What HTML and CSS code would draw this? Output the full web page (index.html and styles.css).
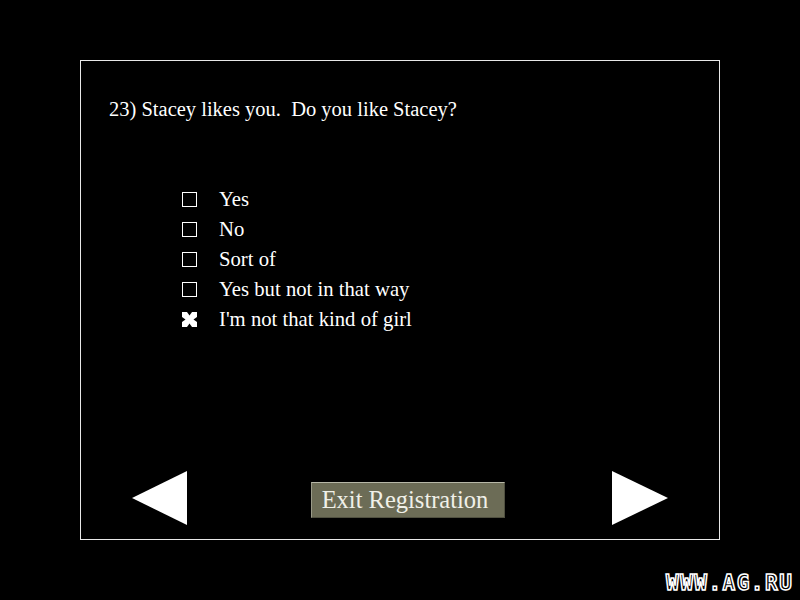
FILE: index.html
```html
<!DOCTYPE html>
<html>
<head>
  <meta charset="utf-8">
  <title>Registration</title>
  <link rel="stylesheet" href="styles.css">
</head>
<body>
 <div class="screen">
   <div class="mod-form">
     <p class="question">23) Stacey likes you.&nbsp; Do you like Stacey?</p>
     <ul class="answers">
       <li><span class="box"></span>Yes</li>
       <li><span class="box"></span>No</li>
       <li><span class="box"></span>Sort of</li>
       <li><span class="box"></span>Yes but not in that way</li>
       <li class="checked">
         <span class="box">
           <svg width="15" height="15" viewBox="0 0 15 15">
             <rect x="0" y="0" width="15" height="15" fill="#fff"/>
             <polygon points="5,0 10,0 7.5,3.5" fill="#000"/>
             <polygon points="5,15 10,15 7.5,11.5" fill="#000"/>
             <polygon points="0,5 0,10 3.5,7.5" fill="#000"/>
             <polygon points="15,5 15,10 11.5,7.5" fill="#000"/>
           </svg>
         </span>I'm not that kind of girl</li>
     </ul>
     <div class="nav">
       <svg class="arrow" width="56" height="54" viewBox="0 0 56 54">
         <polygon points="0,27 55,0 55,54" fill="#fff"/>
       </svg>
       <button class="exit">Exit Registration</button>
       <svg class="arrow" width="56" height="54" viewBox="0 0 56 54">
         <polygon points="0,0 56,27 0,54" fill="#fff"/>
       </svg>
     </div>
   </div>
   <div class="mark">WWW.AG.RU</div>
 </div>
</body>
</html>
```

FILE: styles.css
```css
html, body {
  margin: 0;
  padding: 0;
  background: #000;
}
body {
  font-family: "Liberation Serif", "Times New Roman", serif;
  color: #fff;
}
.screen {
  width: 800px;
  height: 600px;
  padding: 60px 0 0 80px;
  box-sizing: border-box;
}
.mod-form {
  width: 640px;
  height: 480px;
  box-sizing: border-box;
  border: 1px solid #e8e8e8;
  display: flex;
  flex-direction: column;
}
.question {
  margin: 36px 0 0 28px;
  font-size: 20.5px;
  line-height: 24px;
}
.answers {
  margin: 63px 0 0 101px;
  padding: 0;
  list-style: none;
}
.answers li {
  display: flex;
  align-items: center;
  height: 30px;
  font-size: 20.7px;
}
.answers .box {
  width: 15px;
  height: 15px;
  box-sizing: border-box;
  border: 1px solid #fff;
  margin-right: 22px;
  display: block;
}
.answers .checked .box {
  border: none;
}
.answers .box svg {
  display: block;
}
.nav {
  margin-top: auto;
  display: flex;
  align-items: center;
  padding: 0 0 14px 51px;
}
.arrow {
  display: block;
}
.exit {
  margin: 4px 0 0 123px;
  width: 194px;
  height: 36px;
  padding: 0 6px 0 0;
  background: #6c6c56;
  color: #f0f0e8;
  border: 1px solid #505040;
  border-top-color: #b8b8a8;
  border-left-color: #9a9a88;
  font-family: "Liberation Serif", "Times New Roman", serif;
  font-size: 24.5px;
  line-height: 34px;
}
.nav .arrow:last-child {
  margin-left: 107px;
}
.mark {
  margin: 33px 0 0 586px;
  font-family: "DejaVu Sans Mono", monospace;
  font-weight: bold;
  font-size: 21px;
  line-height: 20px;
  letter-spacing: 1.5px;
  color: #000;
  -webkit-text-stroke: 1.5px #fff;
}
```
